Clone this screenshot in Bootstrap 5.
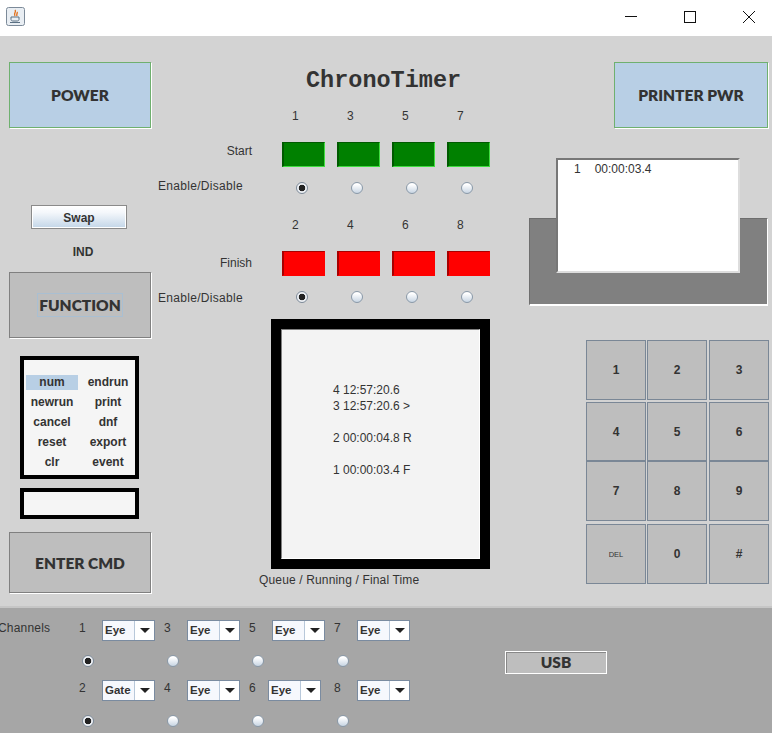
<!DOCTYPE html>
<html>
<head>
    <title>ChronoTimer</title>
    <link href="https://cdn.jsdelivr.net/npm/bootstrap@5.3.3/dist/css/bootstrap.min.css" rel="stylesheet">
    <style>
        body {
          background: #fff;
          font-family: "Liberation Sans", Arial, sans-serif;
          font-size: 12px;
          line-height: 14px;
          color: #333;
          width: 772px;
          height: 733px;
          overflow: hidden;
        }
        /* window title bar */
        .title-strip { height: 36px; padding: 0 11px 2px 6px; }
        .win-btns { gap: 35px; }
        /* main panel */
        .main-panel { height: 570px; background: #d3d3d3; }
        .left-col { width: 158px; padding: 26px 0 0 9px; }
        .mid-col { width: 346px; }
        .right-col { width: 268px; padding-top: 26px; }

        .big-btn {
          width: 142px;
          height: 66px;
          font: 800 15.5px Lato, sans-serif;
          color: #333;
          background: #bebebe;
          border: 1px solid #808080;
          box-shadow: 1px 1px 0 #fff;
          padding: 0;
        }
        .big-btn.lit { background: #b8cfe5; border-color: #6fb06f; }
        .big-btn.short { height: 61px; }
        .printer-btn { width: 154px; margin-left: 110px; }
        .fn-focus { border: 1px solid #a9bfd2; padding: 2px 1px; }

        .swap-btn {
          width: 96px;
          height: 24px;
          margin: 77px 0 0 22px;
          font: 700 12px "Liberation Sans", sans-serif;
          color: #333;
          background: linear-gradient(#fff, #f4f7fb 30%, #c3d6e8);
          border: 1px solid #8a8a8a;
          box-shadow: inset 0 0 0 1px #fff;
          padding: 1px 0 0;
        }
        .ind-label { width: 148px; margin: 16px 0 13px; text-align: center; font-weight: 700; }

        .cmd-box {
          width: 119px;
          height: 123px;
          margin: 18px 0 9px 11px;
          padding: 12px 2px 0;
          border: 4px solid #000;
          background: #f5f5f5;
          display: grid;
          grid-template-columns: 52px 1fr;
          grid-auto-rows: 20px;
          font-weight: 700;
          text-align: center;
          line-height: 15px;
        }
        .cmd-box span { align-self: center; }
        .cmd-box span:nth-child(even) { padding-left: 5px; }
        .cmd-box .picked { background: #b8cfe5; }
        .cmd-input { width: 119px; height: 31px; margin: 0 0 13px 11px; border: 4px solid #000; background: #f5f5f5; }

        /* channel block */
        .title-text {
          padding: 30px 0 0 148px;
          height: 72px;
          font: 700 23.5px/30px "Liberation Mono", monospace;
          color: #333;
        }
        .chan-grid {
          display: grid;
          grid-template-columns: 112px repeat(4, 43px);
          grid-template-rows: 34px 36px 39px 34px 38px 30px;
          column-gap: 12px;
        }
        .chan-num { padding: 1px 0 0 10px; }
        .row-label { justify-self: end; padding-right: 18px; }
        .start-label { margin-top: 2px; }
        .finish-label { margin-top: 5px; }
        .enable-label { margin-top: 1px; letter-spacing: .3px; white-space: nowrap; }
        .enable-label.low { margin-top: 2px; }
        .radio-slot { padding: 4px 0 0 14px; }
        .radio-slot.low { padding-top: 2px; }

        .sensor { display: block; width: 43px; height: 25px; padding: 0; border-style: solid; border-width: 1px 1px 1px 2px; }
        .sensor.green { background: #008000; border-color: #005a00 #3fdc3f #3fdc3f #005a00; }
        .sensor.red { background: #f00; border-color: #a80000 #f00 #f00 #a80000; }

        .sw-radio.form-check-input {
          display: block;
          width: 12px;
          height: 12px;
          margin: 0;
          border: 1px solid #8a99a8;
          background: linear-gradient(#fff 15%, #c8d5e3);
        }
        .sw-radio.form-check-input[type=radio]:checked {
          background: radial-gradient(circle, #222 0 3px, #eef1f5 3.6px);
          border-color: #7d8a98;
        }
        .sw-radio.form-check-input:focus { box-shadow: none; }

        .screen-frame {
          width: 219px;
          height: 250px;
          margin-left: 113px;
          border: 10px solid #000;
          background: #f3f3f3;
        }
        .screen-inner {
          height: 100%;
          padding: 52px 0 0 51px;
          border: 1px solid;
          border-color: #808080 #fff #fff #808080;
          line-height: 16px;
          white-space: pre;
        }
        .screen-cap { margin: 4px 0 0 101px; letter-spacing: .15px; }

        /* printer */
        .printer { position: relative; width: 239px; height: 148px; margin: 30px 0 34px 25px; padding-top: 60px; }
        .tray { height: 88px; background: #808080; border-style: solid; border-width: 1px 1px 2px 1px; border-color: #6e6e6e #fff #fff #6e6e6e; }
        .paper {
          position: absolute;
          left: 27px;
          top: 0;
          width: 184px;
          height: 115px;
          padding: 2px 0 0 16px;
          background: #fff;
          border: 2px solid;
          border-color: #777 #ddd #ddd #777;
        }
        .paper span { margin-right: 14px; }

        .keypad {
          width: 183px;
          margin-left: 82px;
          display: grid;
          grid-template-columns: 60px 60px 61px;
          grid-template-rows: 62px 59px 60px 63px;
          column-gap: 1px;
        }
        .key {
          background: #bebebe;
          border: 1px solid #7a8796;
          font: 700 12px "Liberation Sans", sans-serif;
          color: #333;
          padding: 0;
        }
        .key:nth-child(3n) { margin-left: 1px; }
        .key.tiny { font-size: 7.5px; font-weight: 400; }
        .key.r1 { margin-bottom: 2px; }
        .key.r4 { margin-top: 3px; }

        /* bottom panel */
        .bottom-panel {
          height: 127px;
          padding-top: 12px;
          background: #a6a6a6;
          border-top: 2px solid #c6c6c6;
        }
        .chan-title { width: 79px; margin-left: -2px; margin-top: 1px; flex: none; letter-spacing: .2px; }
        .port-grid {
          display: grid;
          grid-template-columns: repeat(4, 85px);
          grid-auto-rows: 30px;
          flex: none;
          margin-left: 2px;
        }
        .port-grid .sw-radio { margin: 5px 0 0 3px; }
        .port-num { width: 23px; margin-top: 1px; }
        .combo {
          width: 53px;
          height: 21px;
          display: flex;
          border: 1px solid #7a8ba0;
          background: #fff;
          font-size: 11.5px;
          font-weight: 700;
          line-height: 19px;
        }
        .combo.nudge { margin-left: -4px; }
        .combo-text { width: 32px; padding-left: 2px; background: #f6f8fd; border-right: 1px solid #b8c8da; }
        .combo-arrow { flex: 1; display: flex; align-items: center; justify-content: center; }
        .usb-btn {
          width: 102px;
          height: 23px;
          margin: 31px 0 0 86px;
          padding: 0 0 2px;
          font: 800 15.5px/20px Lato, sans-serif;
          color: #333;
          background: #bebebe;
          border: 1px solid #fff;
          box-shadow: inset 1px 1px 0 #888;
        }
    </style>
</head>
<body>

<!-- Title bar -->
<div class="title-strip d-flex align-items-center justify-content-between">
    <svg width="20" height="20" viewBox="0 0 20 20">
        <rect x="0.5" y="0.5" width="18" height="18" rx="2" fill="#e9eef3" stroke="#7c8a99"/>
        <path d="M9 3c2 2-2 3 0 6M11 5c1 1-1 2 0 4" fill="none" stroke="#e2701c" stroke-width="1.4"/>
        <path d="M5 10h8v2.5c0 1-1 1.5-2 1.5H7c-1 0-2-.5-2-1.5z" fill="none" stroke="#5b7083"/>
        <path d="M4 15.5h10" stroke="#5b7083"/>
    </svg>
    <div class="win-btns d-flex align-items-center">
        <svg width="24" height="12" viewBox="0 0 24 12"><path d="M6 5.5h12" stroke="#111"/></svg>
        <svg width="24" height="12" viewBox="0 0 24 12"><rect x="6.5" y="0.5" width="11" height="11" fill="none" stroke="#111"/></svg>
        <svg width="24" height="12" viewBox="0 0 24 12"><path d="M6 0l12 12M18 0L6 12" stroke="#111"/></svg>
    </div>
</div>

<div class="main-panel d-flex">
    <!-- Left column -->
    <div class="left-col">
        <button class="big-btn lit d-block">POWER</button>
        <button class="swap-btn d-block">Swap</button>
        <div class="ind-label">IND</div>
        <button class="big-btn d-block"><span class="fn-focus">FUNCTION</span></button>
        <div class="cmd-box">
            <span class="picked">num</span><span>endrun</span>
            <span>newrun</span><span>print</span>
            <span>cancel</span><span>dnf</span>
            <span>reset</span><span>export</span>
            <span>clr</span><span>event</span>
        </div>
        <div class="cmd-input"></div>
        <button class="big-btn short d-block">ENTER CMD</button>
    </div>

    <!-- Middle column -->
    <div class="mid-col">
        <div class="title-text">ChronoTimer</div>
        <div class="chan-grid" id="chanGrid"></div>
        <div class="screen-frame">
            <div class="screen-inner">4 12:57:20.6
3 12:57:20.6 &gt;

2 00:00:04.8 R

1 00:00:03.4 F</div>
        </div>
        <div class="screen-cap">Queue / Running / Final Time</div>
    </div>

    <!-- Right column -->
    <div class="right-col">
        <button class="big-btn lit d-block printer-btn">PRINTER PWR</button>
        <div class="printer">
            <div class="tray"></div>
            <div class="paper"><span>1</span>00:00:03.4</div>
        </div>
        <div class="keypad" id="keypad"></div>
    </div>
</div>

<!-- Bottom panel -->
<div class="bottom-panel d-flex">
    <div class="chan-title">Channels</div>
    <div class="port-grid" id="portGrid"></div>
    <button class="usb-btn">USB</button>
</div>

<script>
    function radio(name, checked) {
      return '<input type="radio" class="form-check-input sw-radio" name="' + name + '"' + (checked ? " checked" : "") + '>';
    }

    function chanRows(label, labelCls, color, nums, group, low) {
      var lowCls = low ? " low" : "";
      var html = "<div></div>";
      nums.forEach(function (n) { html += '<div class="chan-num">' + n + "</div>"; });
      html += '<div class="row-label ' + labelCls + '">' + label + "</div>";
      nums.forEach(function () { html += '<button class="sensor ' + color + '"></button>'; });
      html += '<div class="enable-label' + lowCls + '">Enable/Disable</div>';
      nums.forEach(function (n, i) { html += '<div class="radio-slot' + lowCls + '">' + radio(group, i === 0) + "</div>"; });
      return html;
    }

    document.getElementById("chanGrid").innerHTML =
      chanRows("Start", "start-label", "green", [1, 3, 5, 7], "startEn", false) +
      chanRows("Finish", "finish-label", "red", [2, 4, 6, 8], "finishEn", true);

    var keys = ["1","2","3","4","5","6","7","8","9","DEL","0","#"];
    document.getElementById("keypad").innerHTML = keys.map(function (k, i) {
      var cls = "key" + (k === "DEL" ? " tiny" : "") + (i < 3 ? " r1" : "") + (i > 8 ? " r4" : "");
      return '<button class="' + cls + '">' + k + "</button>";
    }).join("");

    var ports = [
      [[1, "Eye"], [3, "Eye"], [5, "Eye"], [7, "Eye"]],
      [[2, "Gate"], [4, "Eye"], [6, "Eye", true], [8, "Eye"]]
    ];
    var arrow = '<span class="combo-arrow"><svg width="10" height="5" viewBox="0 0 10 5"><path d="M0 0h10L5 5z" fill="#222"/></svg></span>';
    document.getElementById("portGrid").innerHTML = ports.map(function (row, r) {
      var top = row.map(function (p) {
        return '<div class="d-flex align-items-start"><div class="port-num">' + p[0] + '</div><div class="combo' + (p[2] ? " nudge" : "") + '"><span class="combo-text">' + p[1] + "</span>" + arrow + "</div></div>";
      }).join("");
      var under = row.map(function (p, i) {
        return "<div>" + radio("port" + r, i === 0) + "</div>";
      }).join("");
      return top + under;
    }).join("");
</script>
</body>
</html>
